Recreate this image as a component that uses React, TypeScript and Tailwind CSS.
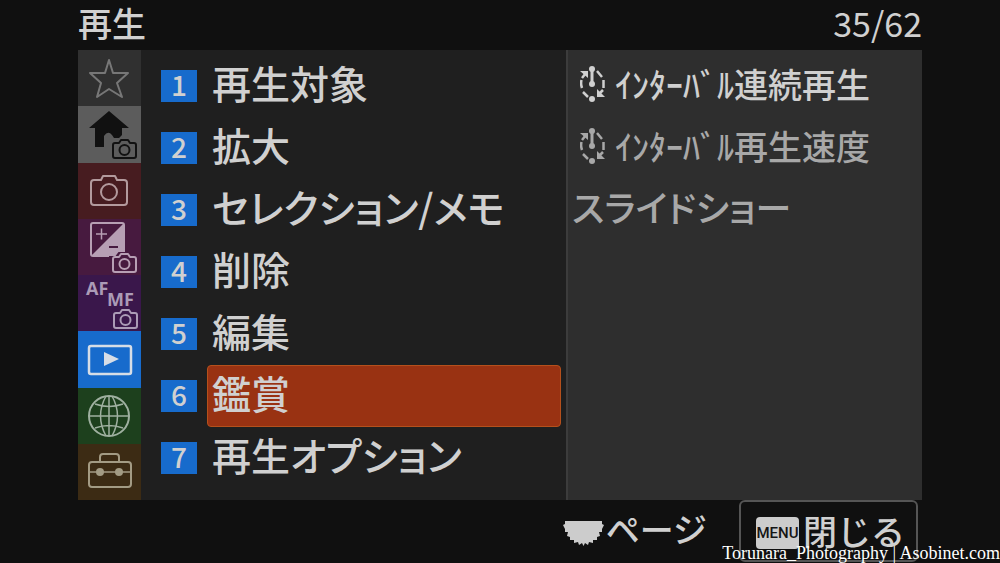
import React from "react";

const SmallCamera = ({ x, y }: { x: number; y: number }) => (
  <g transform={`translate(${x} ${y})`} fill="none" strokeWidth="2">
    <path d="M3 4h4l2-3h7l2 3h4q2 0 2 2v11q0 2-2 2H3q-2 0-2-2V6q0-2 2-2z" strokeLinejoin="round" />
    <circle cx="12.5" cy="11" r="5" />
  </g>
);

const StarIcon = () => (
  <path
    d="M31 10L35 23L50 23L39 33L44 47L31 39L19 47L23 33L12 23L27 23Z"
    fill="none"
    stroke="#777777"
    strokeWidth="2"
    strokeLinejoin="round"
  />
);

const HomeIcon = () => (
  <g stroke="#111111">
    <path d="M31 5l20 17h-7v7l-3 3h-5l-2-3q-4-5-8 1v11h-9V22h-6z" fill="#111111" stroke="none" />
    <SmallCamera x={34} y={33} />
  </g>
);

const CameraIcon = () => (
  <g fill="none" stroke="#b39a9d" strokeWidth="2">
    <path d="M16 17h7l2-4h12l2 4h7q3 0 3 3v19q0 3-3 3H16q-3 0-3-3V20q0-3 3-3z" strokeLinejoin="round" />
    <circle cx="31" cy="29" r="8" />
  </g>
);

const ExposureIcon = () => (
  <g stroke="#b79fb4">
    <rect x="13" y="4" width="33" height="33" rx="2" fill="none" strokeWidth="2" />
    <path d="M45 5v31H14z" fill="#b79fb4" stroke="none" />
    <path d="M18 15h11M23.5 9.5v11" strokeWidth="1.5" />
    <path d="M31 28h9" stroke="#471a3f" strokeWidth="2" />
    <path d="M32 54V38h6l3-4h10l3 4h5v16z" fill="#471a3f" stroke="#471a3f" strokeWidth="2" />
    <SmallCamera x={34} y={34} />
  </g>
);

const FocusIcon = () => (
  <g stroke="#ab9bb6">
    <g fill="#ab9bb6" stroke="none" className="text-[18px] font-bold font-['Open_Sans',sans-serif]">
      <text x="8" y="20">AF</text>
      <text x="29" y="31">MF</text>
    </g>
    <SmallCamera x={35} y={34} />
  </g>
);

const PlaybackIcon = () => (
  <g fill="none" stroke="#d6dde6" strokeWidth="2.5">
    <rect x="11" y="15" width="42" height="28" rx="2" />
    <path d="M26 21l15 7-15 7z" fill="#d6dde6" stroke="none" />
  </g>
);

const GlobeIcon = () => (
  <g fill="none" stroke="#9fb0a0" strokeWidth="1.5">
    <circle cx="31" cy="28" r="20" strokeWidth="2" />
    <path d="M28 8q-11 20 0 40M34 8q11 20 0 40" />
    <path d="M11 28h40M31 8v40M17 16q14 5 28 0M17 40q14-5 28 0" />
  </g>
);

const ToolboxIcon = () => (
  <g fill="none" stroke="#a39b84" strokeWidth="2">
    <rect x="11" y="18" width="42" height="25" rx="3" />
    <path d="M22 18v-5q0-3 3-3h13q3 0 3 3v5" />
    <path d="M11 28h42" strokeWidth="1.5" />
    <g fill="#a39b84" stroke="none">
      <circle cx="22" cy="28" r="4" />
      <circle cx="41" cy="28" r="4" />
    </g>
  </g>
);

const IntervalIcon = () => (
  <svg viewBox="0 0 25 36" className="h-9 w-[25px] shrink-0" fill="none" stroke="currentColor" strokeWidth="2.5" aria-hidden="true">
    <path d="M12 3v15" strokeWidth="3" />
    <path d="M1.5 14q-1 4 .5 8M3 26l5 5M17 5l5 6M23.5 14v8" />
    <path d="M2 12l4-5M23 24l-4 4" />
    <path d="M0 5h8v7zM17 23v8h8z" fill="currentColor" stroke="none" />
    <g fill="currentColor" stroke="none">
      <circle cx="12" cy="3" r="3" />
      <circle cx="12" cy="18" r="3" />
      <circle cx="12" cy="33" r="3" />
    </g>
  </svg>
);

const DialIcon = () => (
  <svg viewBox="0 0 41 25" className="mt-2 h-[25px] w-[41px]" fill="#cccccc" aria-hidden="true">
    <path d="M2 0h37v3l2 1-2 4v3h-3l1 4-3 1v3h-4v3l-4-1-1 3-3-2-1.500 3-1.500-3-3 2-1-3-4 1v-3H7v-3l-3-1 1-4H2V8L0 4l2-1z" />
  </svg>
);

const tabs = [
  { label: "マイメニュー", icon: <StarIcon />, color: "bg-[#303030]" },
  { label: "メイン", icon: <HomeIcon />, color: "bg-[#5c5c5c]" },
  { label: "撮影", icon: <CameraIcon />, color: "bg-[#471c20]" },
  { label: "露出/色", icon: <ExposureIcon />, color: "bg-[#471a3f]" },
  { label: "フォーカス", icon: <FocusIcon />, color: "bg-[#3a174b]" },
  { label: "再生", icon: <PlaybackIcon />, color: "bg-[#176bcc]" },
  { label: "ネットワーク", icon: <GlobeIcon />, color: "bg-[#1d401d]" },
  { label: "セットアップ", icon: <ToolboxIcon />, color: "bg-[#3c2b14]" },
];

const groups = ["再生対象", "拡大", "セレクション/メモ", "削除", "編集", "鑑賞", "再生オプション"];
const activeGroup = 5;

const items = [
  { label: "ｲﾝﾀｰﾊﾞﾙ連続再生", interval: true, enabled: true },
  { label: "ｲﾝﾀｰﾊﾞﾙ再生速度", interval: true, enabled: false },
  { label: "スライドショー", interval: false, enabled: false },
];

const App = () => {
  return (
    <div className="relative flex min-h-screen flex-col bg-[#101010] px-[78px] font-['Noto_Sans_CJK_JP',sans-serif] font-medium text-[#d0d0d0]">
      <header className="flex h-[50px] items-center justify-between pb-1 text-[34px] leading-none">
        <h1>再生</h1>
        <span className="font-normal">35/62</span>
      </header>

      <main className="grid min-h-[450px] grid-cols-[63px_425fr_356fr] bg-[#1f1f1f]">
        <nav className="flex flex-col">
          {tabs.map((tab) => (
            <button key={tab.label} type="button" aria-label={tab.label} className={`flex-1 ${tab.color}`}>
              <svg viewBox="0 0 63 56" className="h-14 w-[63px]" aria-hidden="true">
                {tab.icon}
              </svg>
            </button>
          ))}
        </nav>

        <ul className="pt-[5px] pr-[5px] pl-5">
          {groups.map((group, index) => (
            <li key={group} className="flex h-[62px] items-center gap-[10px]">
              <span className="flex h-8 w-9 shrink-0 items-center justify-center bg-[#176bcc] pb-1 text-[28px] leading-none">
                {index + 1}
              </span>
              <button
                type="button"
                className={`flex h-[62px] flex-1 items-center rounded border pb-2 pl-1 text-left text-[39px] leading-none whitespace-nowrap [font-feature-settings:'palt'] ${
                  index === activeGroup ? "border-[#b5501c] bg-[#993212]" : "border-transparent"
                }`}
              >
                {group}
              </button>
            </li>
          ))}
        </ul>

        <ul className="border-l-2 border-[#3c3c3c] bg-[#2e2e2e] pt-[5px]">
          {items.map((item) => (
            <li key={item.label}>
              <button
                type="button"
                disabled={!item.enabled}
                className={`flex h-[62px] w-full items-center text-left leading-none whitespace-nowrap ${
                  item.enabled ? "text-[#d0d0d0]" : "text-[#a8a8a8]"
                } ${item.interval ? "gap-[10px] pb-1 pl-3 text-[34px]" : "pb-2 pl-1 text-[36px] [font-feature-settings:'palt']"}`}
              >
                {item.interval && <IntervalIcon />}
                <span>{item.label}</span>
              </button>
            </li>
          ))}
        </ul>
      </main>

      <footer className="flex items-center justify-end gap-8 pr-1 text-[34px] leading-none">
        <div className="flex items-center gap-[2px] pb-1">
          <DialIcon />
          <span>ページ</span>
        </div>
        <button type="button" className="flex h-[62px] w-[179px] items-center gap-1 rounded-md border-2 border-[#555555] pl-[15px]">
          <span className="mt-1 flex h-8 w-[43px] items-center justify-center rounded bg-[#cccccc] text-[15px] font-medium text-[#151515] font-['Roboto',sans-serif]">
            MENU
          </span>
          <span>閉じる</span>
        </button>
      </footer>

      <p className="absolute right-0 bottom-0 text-[18px] leading-5 font-normal text-white font-['Liberation_Serif',serif]">
        Torunara_Photography | Asobinet.com
      </p>
    </div>
  );
};

export default App;
